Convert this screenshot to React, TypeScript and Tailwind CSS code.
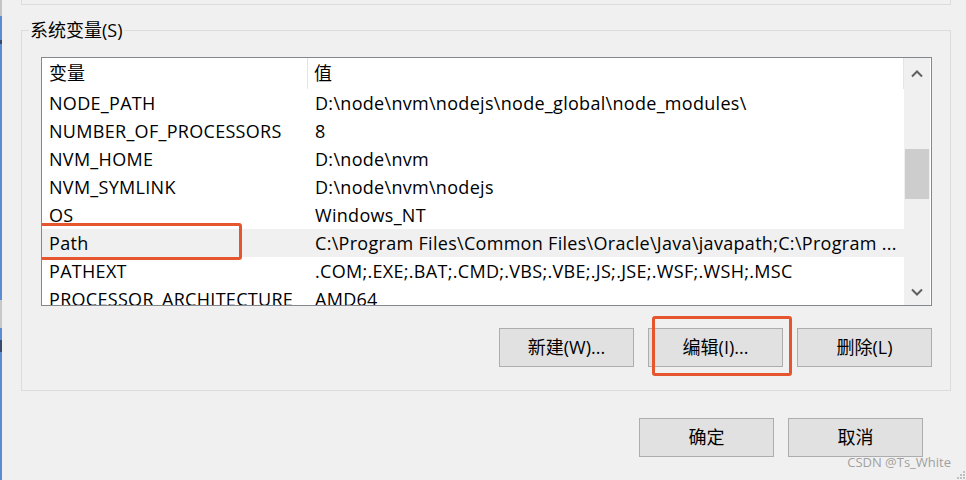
const rows: { name: string; value: string; selected?: boolean }[] = [
  { name: "NODE_PATH", value: "D:\\node\\nvm\\nodejs\\node_global\\node_modules\\" },
  { name: "NUMBER_OF_PROCESSORS", value: "8" },
  { name: "NVM_HOME", value: "D:\\node\\nvm" },
  { name: "NVM_SYMLINK", value: "D:\\node\\nvm\\nodejs" },
  { name: "OS", value: "Windows_NT" },
  {
    name: "Path",
    value: "C:\\Program Files\\Common Files\\Oracle\\Java\\javapath;C:\\Program ...",
    selected: true,
  },
  { name: "PATHEXT", value: ".COM;.EXE;.BAT;.CMD;.VBS;.VBE;.JS;.JSE;.WSF;.WSH;.MSC" },
  { name: "PROCESSOR_ARCHITECTURE", value: "AMD64" },
];

function Chevron({ down }: { down?: boolean }) {
  return (
    <svg width="12" height="8" viewBox="0 0 12 8" fill="none">
      <polyline
        points={down ? "1,1.5 6,6.5 11,1.5" : "1,6.5 6,1.5 11,6.5"}
        stroke="#606060"
        strokeWidth="2"
      />
    </svg>
  );
}

function Button({ label, marked }: { label: string; marked?: boolean }) {
  return (
    <div className="relative">
      <button className="flex h-[39px] w-[135px] items-center justify-center border border-[#adadad] bg-[#e1e1e1] text-[18px] text-black">
        {label}
      </button>
      {marked && (
        <div className="pointer-events-none absolute left-[4px] top-[-12px] h-[60px] w-[140px] rounded-[3px] border-[3px] border-[#e5562f]" />
      )}
    </div>
  );
}

export default function App() {
  return (
    <div
      className="relative flex h-[480px] w-[966px] overflow-hidden bg-[#f0f0f0] text-black"
      style={{ fontFamily: "'Open Sans', 'Noto Sans CJK SC', sans-serif" }}
    >
      {/* window edge behind the dialog */}
      <div className="flex w-[2px] flex-col">
        <div className="h-[16px] bg-[#c4c4c4]" />
        <div className="h-[24px] bg-[#5b8bd3]" />
        <div className="h-[4px] bg-[#3a4a6a]" />
        <div className="h-[256px] bg-[#5b8bd3]" />
        <div className="h-[28px] bg-[#c8c8c8]" />
        <div className="h-[12px] bg-[#5b8bd3]" />
        <div className="h-[12px] bg-[#3a4a6a]" />
        <div className="flex-1 bg-[#5b8bd3]" />
      </div>

      <div className="flex flex-1 flex-col pl-[19px]">
        {/* previous group (user variables) */}
        <div className="h-[5px] w-[930px] border-x border-b border-[#dcdcdc]" />

        {/* system variables group */}
        <div className="relative mt-[25px] h-[361px] w-[930px] border border-[#dcdcdc]">
          <span className="absolute left-[7px] top-[-12px] bg-[#f0f0f0] px-[1px] text-[18px] leading-[22px]">
            系统变量(S)
          </span>

          <div className="ml-[19px] mt-[26px] flex h-[249px] w-[891px] border border-[#828790] bg-white">
            <div className="flex w-[862px] flex-col overflow-hidden">
              <div className="flex h-[31px] shrink-0 text-[18px]">
                <div className="flex w-[266px] items-center border-r border-[#e5e5e5] pl-[7px]">变量</div>
                <div className="flex flex-1 items-center border-r border-[#e5e5e5] pl-[6px]">值</div>
              </div>
              {rows.map((r) => (
                <div
                  key={r.name}
                  className={`relative flex h-[28px] shrink-0 items-center text-[18px] tracking-[0.3px] ${r.selected ? "bg-[#f0f0f0]" : ""}`}
                >
                  <div className="w-[267px] overflow-hidden whitespace-nowrap pl-[7px]">{r.name}</div>
                  <div className="flex-1 overflow-hidden whitespace-nowrap pl-[6px]">{r.value}</div>
                  {r.selected && (
                    <div className="pointer-events-none absolute left-[-6px] top-[-6px] h-[37px] w-[206px] rounded-[3px] border-[3px] border-[#e5562f]" />
                  )}
                </div>
              ))}
            </div>

            <div className="flex w-[26px] flex-col bg-[#f0f0f0] px-[1px]">
              <div className="flex h-[32px] items-center justify-center">
                <Chevron />
              </div>
              <div className="flex-1">
                <div className="mt-[59px] h-[50px] bg-[#cdcdcd]" />
              </div>
              <div className="flex h-[26px] items-center justify-center">
                <Chevron down />
              </div>
            </div>
          </div>

          <div className="mt-[22px] flex justify-end gap-[14px] pr-[18px]">
            <Button label="新建(W)..." />
            <Button label="编辑(I)..." marked />
            <Button label="删除(L)" />
          </div>
        </div>

        <div className="mt-[27px] flex w-[902px] justify-end gap-[14px]">
          <Button label="确定" />
          <Button label="取消" />
        </div>
      </div>

      {/* watermark */}
      <span className="absolute bottom-[8px] right-[15px] text-[13px] text-[#a0a0a0]">CSDN @Ts_White</span>
      <div className="absolute bottom-[1px] right-[1px] grid grid-cols-3 gap-[1px]">
        {[0, 1, 2, 3, 4, 5, 6, 7, 8].map((i) => (
          <div key={i} className={`h-[2px] w-[2px] ${i === 0 || i === 1 || i === 3 ? "" : "bg-[#c0c0c0]"}`} />
        ))}
      </div>
    </div>
  );
}
